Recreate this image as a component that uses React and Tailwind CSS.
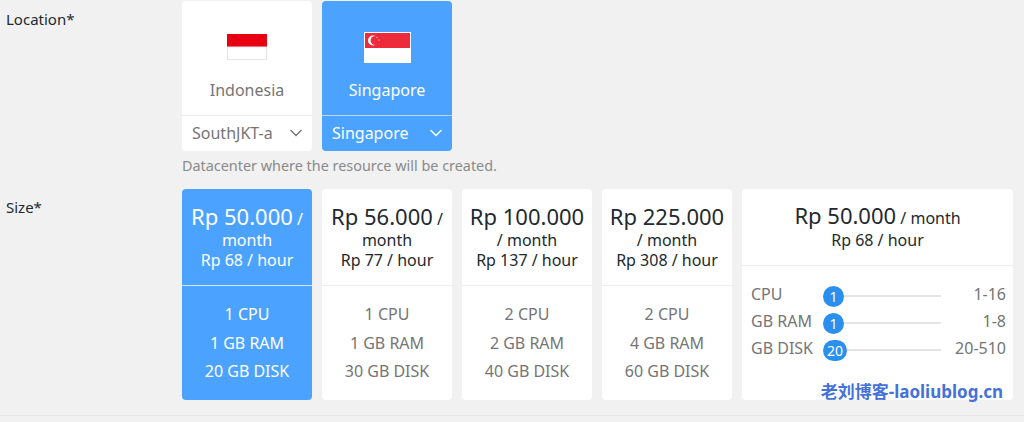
const plans = [
  { price: "Rp 50.000", hour: "Rp 68 / hour", cpu: "1 CPU", ram: "1 GB RAM", disk: "20 GB DISK", active: true },
  { price: "Rp 56.000", hour: "Rp 77 / hour", cpu: "1 CPU", ram: "1 GB RAM", disk: "30 GB DISK" },
  { price: "Rp 100.000", hour: "Rp 137 / hour", cpu: "2 CPU", ram: "2 GB RAM", disk: "40 GB DISK" },
  { price: "Rp 225.000", hour: "Rp 308 / hour", cpu: "2 CPU", ram: "4 GB RAM", disk: "60 GB DISK" },
];

const sliders = [
  { label: "CPU", value: "1", range: "1-16" },
  { label: "GB RAM", value: "1", range: "1-8" },
  { label: "GB DISK", value: "20", range: "20-510" },
];

function Chevron({ className }) {
  return (
    <svg width="14" height="8" viewBox="0 0 14 8" fill="none" className={className}>
      <path d="M1.5 1 L7 6.5 L12.5 1" stroke="currentColor" strokeWidth="1.4" />
    </svg>
  );
}

function IndonesiaFlag() {
  return (
    <svg width="40" height="26" viewBox="0 0 40 26">
      <rect width="40" height="13" fill="#e70011" />
      <rect y="13" width="40" height="13" fill="#fff" />
      <rect x="0.5" y="13" width="39" height="12.5" fill="none" stroke="#e6e6e6" />
    </svg>
  );
}

function SingaporeFlag() {
  return (
    <svg width="47" height="31" viewBox="0 0 47 31">
      <rect width="47" height="31" fill="#fff" />
      <rect x="1" y="1" width="45" height="15" fill="#ee2b3b" />
      <circle cx="9" cy="8.5" r="5" fill="#fff" />
      <circle cx="11.2" cy="8.5" r="4.6" fill="#ee2b3b" />
      <circle cx="13" cy="5.5" r="0.6" fill="#fff" />
      <circle cx="15" cy="8" r="0.6" fill="#fff" />
    </svg>
  );
}

function LocationCard({ name, region, active, flag }) {
  return (
    <div className={`w-[130px] h-[150px] rounded flex flex-col ${active ? "bg-[#4ba3ff] text-white" : "bg-white text-[#757575]"}`}>
      <div className="h-[114px] flex flex-col items-center">
        <div className="h-[78px] pt-[14px] flex items-center justify-center">{flag}</div>
        <div className="text-[16px] leading-[22px]">{name}</div>
      </div>
      <div className={`h-[36px] border-t pb-[2px] flex items-center justify-between pl-[10px] pr-[9px] ${active ? "border-[#b5d9ff]" : "border-[#ececec]"}`}>
        <span className="text-[16px]">{region}</span>
        <Chevron />
      </div>
    </div>
  );
}

function PlanCard({ plan }) {
  const a = plan.active;
  return (
    <div className={`w-[130px] h-[211px] rounded flex flex-col ${a ? "bg-[#4ba3ff] text-white" : "bg-white"}`}>
      <div className={`h-[97px] border-b pt-[13px] px-[6px] text-center ${a ? "border-[#cfe6ff]" : "border-[#ececec] text-[#22292f]"}`}>
        <div className="leading-[20px]">
          <span className="text-[22px] leading-[28px]">{plan.price}</span> <span className="text-[16px]">/</span> <span className="text-[16px]">month</span>
        </div>
        <div className="text-[16px] leading-[20px]">{plan.hour}</div>
      </div>
      <div className={`flex flex-col items-center pt-[14px] text-[16px] leading-[28.5px] ${a ? "" : "text-[#757575]"}`}>
        <div>{plan.cpu}</div>
        <div>{plan.ram}</div>
        <div>{plan.disk}</div>
      </div>
    </div>
  );
}

function CustomCard() {
  return (
    <div className="relative w-[271px] h-[211px] rounded bg-white flex flex-col">
      <div className="h-[77px] border-b border-[#ececec] pt-[14px] text-center text-[#22292f]">
        <div className="leading-[24px]">
          <span className="text-[22px]">Rp 50.000</span> <span className="text-[16px]">/ month</span>
        </div>
        <div className="text-[16px] leading-[20px]">Rp 68 / hour</div>
      </div>
      <div className="flex flex-col pt-[14px] pl-[9px] pr-[7px] text-[16px] text-[#757575]">
        {sliders.map((s) => (
          <div key={s.label} className="h-[27px] flex items-center">
            <span className="w-[72px] leading-[20px]">{s.label}</span>
            <div className="relative w-[118px] h-[2px] mt-[5px] bg-[#e4e4e4]">
              <span className="absolute left-0 top-[-9.5px] min-w-[21px] h-[21px] px-[4px] rounded-full bg-[#2b8fee] text-white text-[14px] leading-[21px] text-center">
                {s.value}
              </span>
            </div>
            <span className="ml-auto leading-[20px]">{s.range}</span>
          </div>
        ))}
      </div>
      <div className="absolute right-[10px] bottom-[-3px] text-[17px] leading-[22px] font-bold text-[#4472d8] whitespace-nowrap">
        老刘博客-laoliublog.cn
      </div>
    </div>
  );
}

export default function App() {
  return (
    <div className="w-[1024px] h-[422px] overflow-hidden bg-[#f1f1f1] font-['Noto_Sans','Noto_Sans_CJK_SC',sans-serif]">
      <div className="flex pt-[1px]">
        <div className="w-[182px] pl-[6px] pt-[8px] text-[15px] leading-[20px] text-[#22292f]">Location*</div>
        <div className="flex flex-col">
          <div className="flex gap-[10px]">
            <LocationCard name="Indonesia" region="SouthJKT-a" flag={<IndonesiaFlag />} />
            <LocationCard name="Singapore" region="Singapore" flag={<SingaporeFlag />} active />
          </div>
          <div className="mt-[5px] text-[14.4px] leading-[20px] text-[#8a8a8a]">Datacenter where the resource will be created.</div>
        </div>
      </div>
      <div className="flex mt-[13px]">
        <div className="w-[182px] pl-[6px] pt-[8px] text-[15px] leading-[20px] text-[#22292f]">Size*</div>
        <div className="flex gap-[10px]">
          {plans.map((p) => (
            <PlanCard key={p.price} plan={p} />
          ))}
          <CustomCard />
        </div>
      </div>
      <div className="mt-[15px] border-t border-[#e6e6e6]" />
    </div>
  );
}
